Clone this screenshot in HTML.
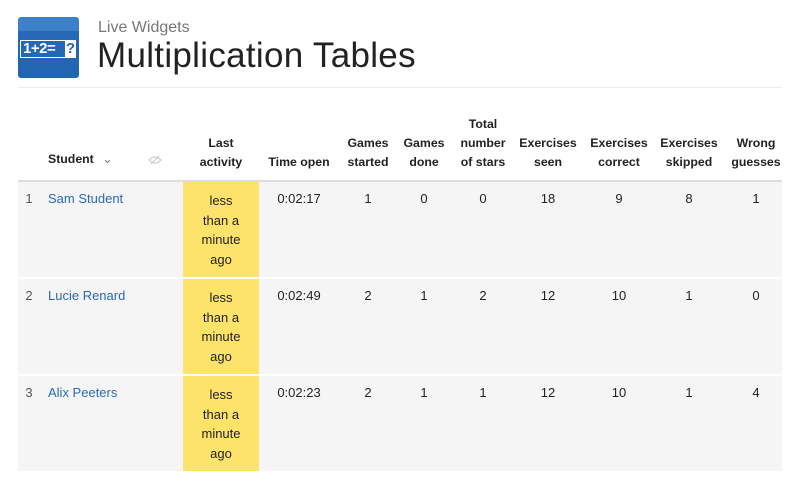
<!DOCTYPE html>
<html><head><meta charset="utf-8"><style>
body{margin:0;width:800px;height:491px;background:#fff;font-family:"Liberation Sans",sans-serif;position:relative;overflow:hidden;color:#222}
.a{position:absolute}
.h{position:absolute;font-size:12.3px;font-weight:bold;color:#222;text-align:center;line-height:19px;transform:translateX(-50%);white-space:nowrap}
.c{position:absolute;font-size:13px;color:#222;text-align:center;transform:translateX(-50%);white-space:nowrap}
.row{position:absolute;left:18px;width:764px;background:#f5f5f5}
.yl{position:absolute;left:183px;width:76px;background:#fde36a}
.name{position:absolute;left:48px;font-size:13px;color:#2a6ab3}
.ac{font-size:13px;line-height:19.5px;text-align:center}
</style></head><body>
<div class="a" style="left:18px;top:17px;width:61px;height:61px;border-radius:3px;background:linear-gradient(#3c80c8 0,#3c80c8 14px,#2668b4 14px,#2166b0)"></div>
<div class="a" style="left:20px;top:40px;width:56px;height:18px;border:1px solid #fff;box-sizing:border-box;color:#fff;font-weight:bold;font-size:15px;line-height:16px;padding-left:2px;letter-spacing:-0.5px">1+2=</div>
<div class="a" style="left:65px;top:40px;width:11px;height:18px;background:#fff;color:#2166b0;font-weight:bold;font-size:15px;line-height:18px;text-align:center">?</div>
<div class="a" style="left:98px;top:19px;font-size:16px;color:#777">Live Widgets</div>
<div class="a" style="left:97px;top:36px;font-size:35px;color:#222;letter-spacing:0.3px">Multiplication Tables</div>
<div class="a" style="left:18px;top:87px;width:764px;height:1px;background:#eee"></div>

<div class="a" style="left:48px;top:152px;font-size:12.3px;font-weight:bold">Student <span style="font-weight:normal;color:#777;margin-left:5px">&#8964;</span></div>
<svg class="a" style="left:148px;top:155px" width="14" height="10" viewBox="0 0 14 10"><path d="M1 5Q7 -1 13 5Q7 11 1 5Z M3 9L11 1" fill="none" stroke="#ccc" stroke-width="1.2"/></svg>
<div class="h" style="left:221px;top:134px">Last<br>activity</div>
<div class="h" style="left:299px;top:153px">Time open</div>
<div class="h" style="left:368px;top:134px">Games<br>started</div>
<div class="h" style="left:424px;top:134px">Games<br>done</div>
<div class="h" style="left:483px;top:115px">Total<br>number<br>of stars</div>
<div class="h" style="left:548px;top:134px">Exercises<br>seen</div>
<div class="h" style="left:619px;top:134px">Exercises<br>correct</div>
<div class="h" style="left:689px;top:134px">Exercises<br>skipped</div>
<div class="h" style="left:756px;top:134px">Wrong<br>guesses</div>
<div class="a" style="left:18px;top:180px;width:764px;height:2px;background:#ddd"></div>

<div class="row" style="top:182px;height:95px"></div>
<div class="row" style="top:279px;height:95px"></div>
<div class="row" style="top:376px;height:95px"></div>
<div class="yl" style="top:182px;height:95px"></div>
<div class="yl" style="top:279px;height:95px"></div>
<div class="yl" style="top:376px;height:95px"></div>

<div class="a" style="left:0;top:191px;width:800px">
<div class="c" style="left:29px;color:#555">1</div><div class="name">Sam Student</div>
<div class="c ac" style="left:221px">less<br>than a<br>minute<br>ago</div>
<div class="c" style="left:299px">0:02:17</div><div class="c" style="left:368px">1</div><div class="c" style="left:424px">0</div><div class="c" style="left:483px">0</div><div class="c" style="left:548px">18</div><div class="c" style="left:619px">9</div><div class="c" style="left:689px">8</div><div class="c" style="left:756px">1</div>
</div>
<div class="a" style="left:0;top:288px;width:800px">
<div class="c" style="left:29px;color:#555">2</div><div class="name">Lucie Renard</div>
<div class="c ac" style="left:221px">less<br>than a<br>minute<br>ago</div>
<div class="c" style="left:299px">0:02:49</div><div class="c" style="left:368px">2</div><div class="c" style="left:424px">1</div><div class="c" style="left:483px">2</div><div class="c" style="left:548px">12</div><div class="c" style="left:619px">10</div><div class="c" style="left:689px">1</div><div class="c" style="left:756px">0</div>
</div>
<div class="a" style="left:0;top:385px;width:800px">
<div class="c" style="left:29px;color:#555">3</div><div class="name">Alix Peeters</div>
<div class="c ac" style="left:221px">less<br>than a<br>minute<br>ago</div>
<div class="c" style="left:299px">0:02:23</div><div class="c" style="left:368px">2</div><div class="c" style="left:424px">1</div><div class="c" style="left:483px">1</div><div class="c" style="left:548px">12</div><div class="c" style="left:619px">10</div><div class="c" style="left:689px">1</div><div class="c" style="left:756px">4</div>
</div>
</body></html>
